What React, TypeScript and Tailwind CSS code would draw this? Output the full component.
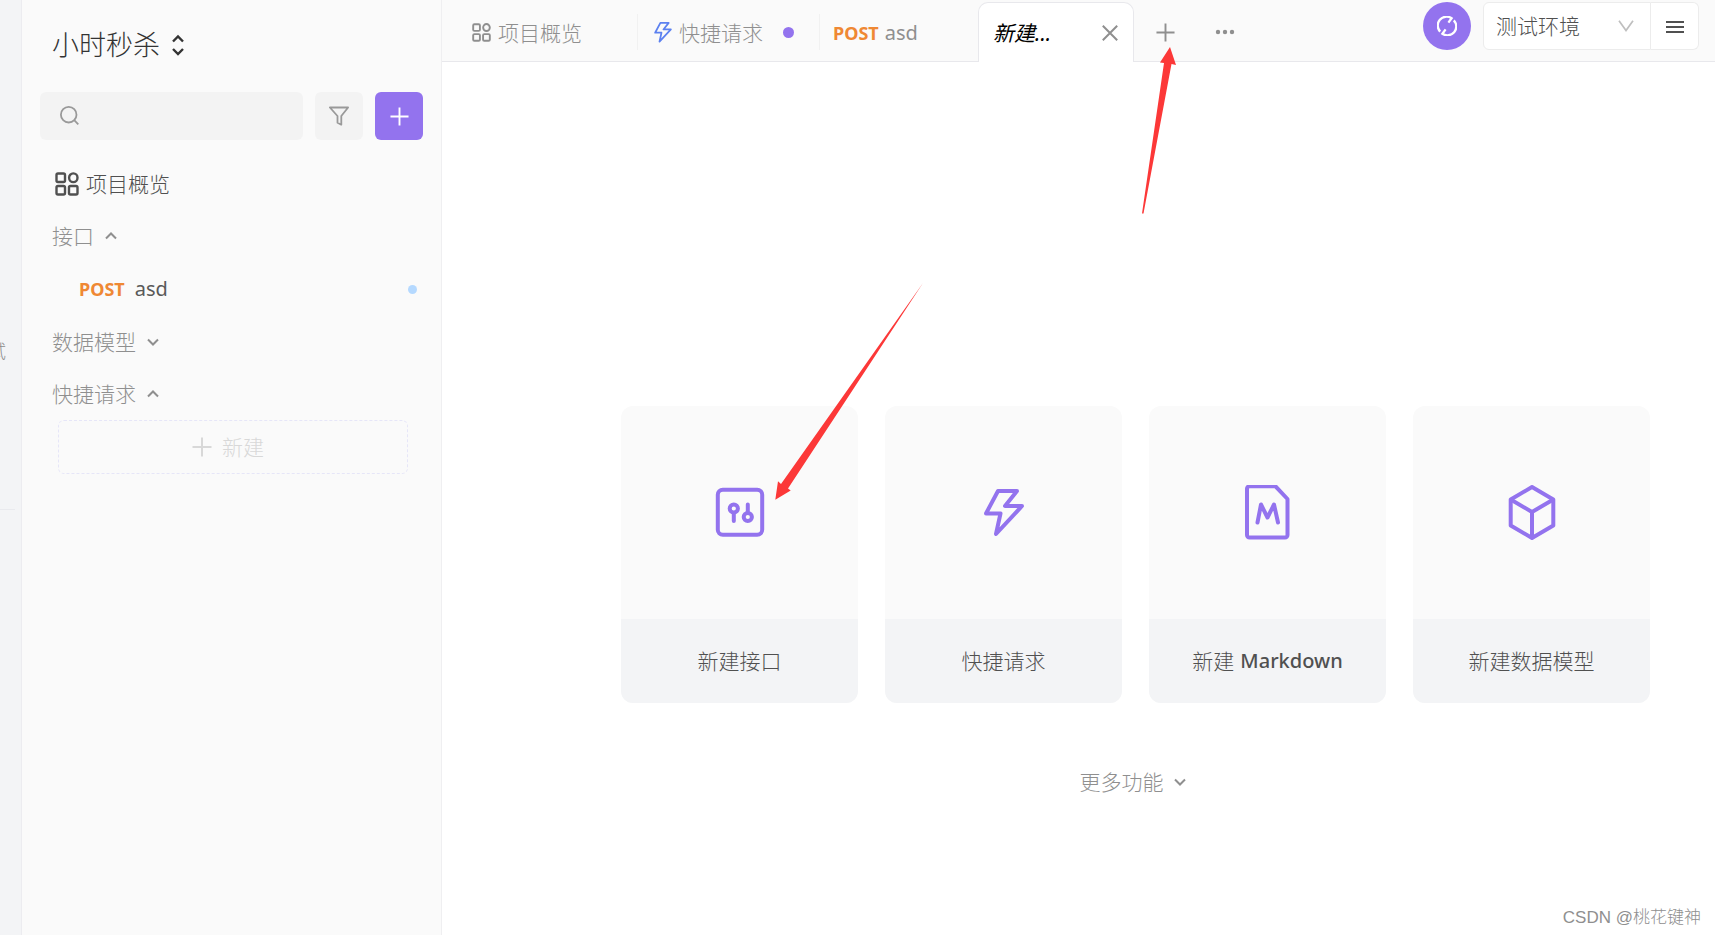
import { useState } from 'react';
import type { ReactNode } from 'react';

function GridIcon({ className, stroke = 2.4 }: { className?: string; stroke?: number }) {
  return (
    <svg viewBox="0 0 24 24" fill="none" stroke="currentColor" strokeWidth={stroke} className={className} aria-hidden="true">
      <rect x="1.5" y="1.5" width="8.5" height="8.5" rx="1.5" />
      <ellipse cx="18.3" cy="5.75" rx="4.2" ry="4.4" />
      <rect x="1.5" y="14" width="8.5" height="8.5" rx="1.5" />
      <rect x="14" y="14" width="8.5" height="8.5" rx="1.5" />
    </svg>
  );
}

function BoltIcon({ className, stroke = 4 }: { className?: string; stroke?: number }) {
  return (
    <svg viewBox="0 0 40 48" fill="none" stroke="currentColor" strokeWidth={stroke} strokeLinejoin="round" className={className} aria-hidden="true">
      <path d="M14 2H33L21 17H38L12 45L16.5 24.5H2Z" />
    </svg>
  );
}

function PlusIcon({ className }: { className?: string }) {
  return (
    <svg viewBox="0 0 20 20" fill="none" stroke="currentColor" strokeWidth="2" className={className} aria-hidden="true">
      <path d="M10 .5V19.5M.5 10H19.5" />
    </svg>
  );
}

function Chevron({ up = false }: { up?: boolean }) {
  return (
    <svg viewBox="0 0 12 8" fill="none" stroke="currentColor" strokeWidth="2" className="h-2 w-3" aria-hidden="true">
      <path d={up ? 'M1 6.5L6 1.5L11 6.5' : 'M1 1.5L6 6.5L11 1.5'} />
    </svg>
  );
}

const cards: { label: string; latin?: string; icon: ReactNode }[] = [
  {
    label: '新建接口',
    icon: (
      <svg viewBox="0 0 56 56" fill="none" stroke="currentColor" strokeWidth="4" strokeLinecap="round" className="size-14" aria-hidden="true">
        <rect x="5.8" y="4.8" width="44.4" height="45" rx="5" />
        <circle cx="21.8" cy="23.5" r="4.1" />
        <path d="M21.8 28V36M35.8 19.5V27.5" />
        <circle cx="35.8" cy="32" r="4.1" />
      </svg>
    ),
  },
  { label: '快捷请求', icon: <BoltIcon className="h-12 w-10" /> },
  {
    label: '新建',
    latin: 'Markdown',
    icon: (
      <svg viewBox="0 0 56 56" fill="none" stroke="currentColor" strokeWidth="4" strokeLinecap="round" strokeLinejoin="round" className="size-14" aria-hidden="true">
        <path d="M9.5 1.3H35.5L47.5 14V50A2.5 2.5 0 0 1 45 52.5H9.5A2.5 2.5 0 0 1 7 50V3.8A2.5 2.5 0 0 1 9.5 1.3Z" />
        <path d="M17.5 37.5L21 19.5L27.5 32.5L34 19.5L38 37.5" />
      </svg>
    ),
  },
  {
    label: '新建数据模型',
    icon: (
      <svg viewBox="0 0 56 56" fill="none" stroke="currentColor" strokeWidth="4" strokeLinejoin="round" className="size-14" aria-hidden="true">
        <path d="M28 2L49.3 14.5V40.5L28 53L6.7 40.5V14.5Z" />
        <path d="M6.7 14.5L28 27L49.3 14.5M28 27V53" />
      </svg>
    ),
  },
];

function SectionToggle({ label, open, onClick }: { label: string; open: boolean; onClick: () => void }) {
  return (
    <button onClick={onClick} aria-expanded={open} className="flex h-[52px] items-center gap-[11px] self-start pl-3 text-[#8f8f8f]">
      <span>{label}</span>
      <Chevron up={open} />
    </button>
  );
}

function Sidebar() {
  const [open, setOpen] = useState({ api: true, model: false, quick: true });

  return (
    <aside className="flex w-[420px] shrink-0 flex-col border-r border-[#efeff1] bg-[#fafafa] pr-[18px] pl-[18px]">
      <button className="flex h-[90px] items-center gap-3 self-start pl-3 text-[27px] text-[#333]">
        <span>小时秒杀</span>
        <svg viewBox="0 0 12 22" fill="none" stroke="currentColor" strokeWidth="2.4" className="h-[22px] w-3" aria-hidden="true">
          <path d="M1 7.5L6 2.5L11 7.5M1 15L6 20L11 15" />
        </svg>
      </button>

      <div className="mt-[2px] flex gap-3">
        <label className="flex h-12 min-w-0 flex-1 items-center rounded-md bg-[#f3f3f3] pl-5 text-[#999]">
          <svg viewBox="0 0 20 20" fill="none" stroke="currentColor" strokeWidth="1.8" className="size-5 shrink-0" aria-hidden="true">
            <circle cx="8.7" cy="8.7" r="7.8" />
            <path d="M14.2 14.2L18.3 18.3" />
          </svg>
          <input type="search" aria-label="搜索" className="h-full min-w-0 flex-1 bg-transparent px-3 outline-none" />
        </label>
        <button aria-label="筛选" className="flex size-12 items-center justify-center rounded-md bg-[#f3f3f3] text-[#999]">
          <svg viewBox="0 0 20 20" fill="none" stroke="currentColor" strokeWidth="1.8" strokeLinejoin="round" className="size-5" aria-hidden="true">
            <path d="M.9 1.5H19.1L12.3 10V18.7L8.5 16.7V10Z" />
          </svg>
        </button>
        <button aria-label="添加" className="flex size-12 items-center justify-center rounded-md bg-[#9373ee] text-white">
          <PlusIcon className="size-[19px]" />
        </button>
      </div>

      <nav className="mt-[18px] flex flex-col">
        <a href="#overview" className="flex h-[52px] items-center gap-[7px] pl-[15px] text-[#505050]">
          <GridIcon className="size-6" />
          <span>项目概览</span>
        </a>
        <SectionToggle label="接口" open={open.api} onClick={() => setOpen({ ...open, api: !open.api })} />
        {open.api && (
          <a href="#asd" className="flex h-[54px] items-center gap-[10px] pr-[6px] pl-[39px] text-[#595959]">
            <span className="text-lg font-bold text-[#ef8834]">POST</span>
            <span className="flex-1 text-xl font-normal">asd</span>
            <span className="size-[9px] rounded-full bg-[#b5d9ff]" />
          </a>
        )}
        <SectionToggle label="数据模型" open={open.model} onClick={() => setOpen({ ...open, model: !open.model })} />
        <SectionToggle label="快捷请求" open={open.quick} onClick={() => setOpen({ ...open, quick: !open.quick })} />
        {open.quick && (
          <button className="mr-[15px] ml-[18px] flex h-[54px] items-center justify-center gap-[10px] rounded-md border border-dashed border-[#e6e6f8] pr-[10px] text-[#d8d8d8]">
            <PlusIcon className="size-5" />
            <span>新建</span>
          </button>
        )}
      </nav>
    </aside>
  );
}

function TabBar() {
  return (
    <header className="flex h-[62px] border-b border-[#e8e8ec] bg-[#fafafa] text-[#8f8f8f]">
      <div className="flex">
        <button className="flex w-[195px] items-center gap-[7px] pt-1 pl-[30px]">
          <GridIcon className="size-[19px]" />
          <span>项目概览</span>
        </button>
        <span className="mt-[14px] h-9 w-px bg-[#f1f1f1]" />
        <button className="flex w-[181px] items-center pt-1 pl-4">
          <BoltIcon className="h-[21px] w-[18px] text-[#5c81f0]" />
          <span className="ml-[7px]">快捷请求</span>
          <span className="ml-5 size-[11px] rounded-full bg-[#9373ee]" />
        </button>
        <span className="mt-[14px] h-9 w-px bg-[#f1f1f1]" />
        <button className="flex w-[158px] items-center gap-[6px] pt-1 pl-[13px]">
          <span className="text-lg font-bold text-[#ef8834]">POST</span>
          <span className="text-xl font-normal">asd</span>
        </button>
      </div>

      <div className="mt-[2px] -mb-px flex w-[156px] items-center justify-between rounded-t-[10px] border border-b-0 border-[#e8e8ec] bg-white pr-[15px] pl-[14px]">
        <button className="font-normal text-black italic">新建...</button>
        <button aria-label="关闭">
          <svg viewBox="0 0 16 16" fill="none" stroke="currentColor" strokeWidth="2" className="size-4" aria-hidden="true">
            <path d="M.8 .8L15.2 15.2M15.2 .8L.8 15.2" />
          </svg>
        </button>
      </div>

      <button aria-label="新建标签" className="pt-[3px] pl-[22px]">
        <PlusIcon className="size-[19px]" />
      </button>
      <button aria-label="更多" className="pt-[3px] pl-10">
        <svg viewBox="0 0 20 6" fill="currentColor" className="h-[6px] w-5" aria-hidden="true">
          <circle cx="3" cy="3" r="2.2" />
          <circle cx="10" cy="3" r="2.2" />
          <circle cx="17" cy="3" r="2.2" />
        </svg>
      </button>

      <div className="mt-[2px] mr-4 ml-auto flex h-12 text-[#505050]">
        <button aria-label="同步" className="mr-3 flex size-12 items-center justify-center rounded-full bg-[#9373ee] text-white">
          <svg viewBox="0 0 20 20" fill="none" stroke="currentColor" strokeWidth="2.3" className="size-5" aria-hidden="true">
            <path d="M3.2 15.6A8.8 8.8 0 0 1 14.6 2.3L11.4 6.6" />
            <path d="M16.8 4.4A8.8 8.8 0 0 1 5.4 17.7L8.6 13.4" />
          </svg>
        </button>
        <div className="grid w-[168px] items-center rounded-l-md border border-[#ececec] bg-white">
          <select aria-label="环境" className="col-start-1 row-start-1 h-full w-full appearance-none bg-transparent pl-3 outline-none">
            <option>测试环境</option>
          </select>
          <svg viewBox="0 0 16 12" fill="none" stroke="#bfbfbf" strokeWidth="1.7" className="pointer-events-none col-start-1 row-start-1 mr-4 h-3 w-4 justify-self-end" aria-hidden="true">
            <path d="M1 .8L8 10.5L15 .8" />
          </svg>
        </div>
        <button aria-label="菜单" className="flex w-12 items-center justify-center rounded-r-md border border-l-0 border-[#ececec] bg-white pt-[2px]">
          <svg viewBox="0 0 18 14" stroke="currentColor" strokeWidth="2" className="h-[14px] w-[18px]" aria-hidden="true">
            <path d="M0 2H18M0 7H18M0 12H18" />
          </svg>
        </button>
      </div>
    </header>
  );
}

export default function App() {
  return (
    <div className="relative flex min-h-screen bg-white font-['Noto_Sans','Noto_Sans_CJK_SC',sans-serif] text-[21px] leading-7 font-light">
      {/* Edge of the main navigation rail */}
      <div className="flex w-[22px] shrink-0 flex-col overflow-hidden border-r border-[#ececf0] bg-[#f3f4f6]">
        <div className="mt-[337px] flex w-[6px] justify-end overflow-hidden text-lg text-[#8c8c8c]">
          <span>试</span>
        </div>
        <hr className="mt-36 w-[15px] border-[#e9eaee]" />
      </div>

      <Sidebar />

      <main className="min-w-0 flex-1">
        <TabBar />
        <section className="pt-[344px] pr-[65px] pl-[179px]">
          <div className="grid grid-cols-4 gap-[27px]">
            {cards.map((card) => (
              <button key={card.label} className="overflow-hidden rounded-xl bg-[#fafafa]">
                <span className="flex h-[213px] items-center justify-center text-[#9373ee]">{card.icon}</span>
                <span className="flex h-[84px] items-center justify-center gap-[6px] bg-[#f3f4f6] text-[#505050]">
                  {card.label}
                  {card.latin && <span className="text-xl font-medium">{card.latin}</span>}
                </span>
              </button>
            ))}
          </div>
          <button className="mx-auto flex items-center gap-[10px] pt-[65px] pr-[6px] text-[#8f8f8f]">
            <span>更多功能</span>
            <Chevron />
          </button>
        </section>
      </main>

      {/* Annotation arrows */}
      <svg className="pointer-events-none absolute inset-0 h-full w-full" fill="#fc3838" aria-hidden="true">
        <path d="M1170 47L1160 62.5L1164 63L1142 213.5H1143.5L1171.5 64L1176 65Z" />
        <path d="M775.3 499.7L778 481.3L781 484L923 283L788 488.5L790.7 490.5Z" />
      </svg>

      <p className="absolute right-[14px] bottom-[3px] font-['Liberation_Sans','Noto_Sans_CJK_SC',sans-serif] text-[17px] text-[#8f8f8f]">
        CSDN @桃花键神
      </p>
    </div>
  );
}
